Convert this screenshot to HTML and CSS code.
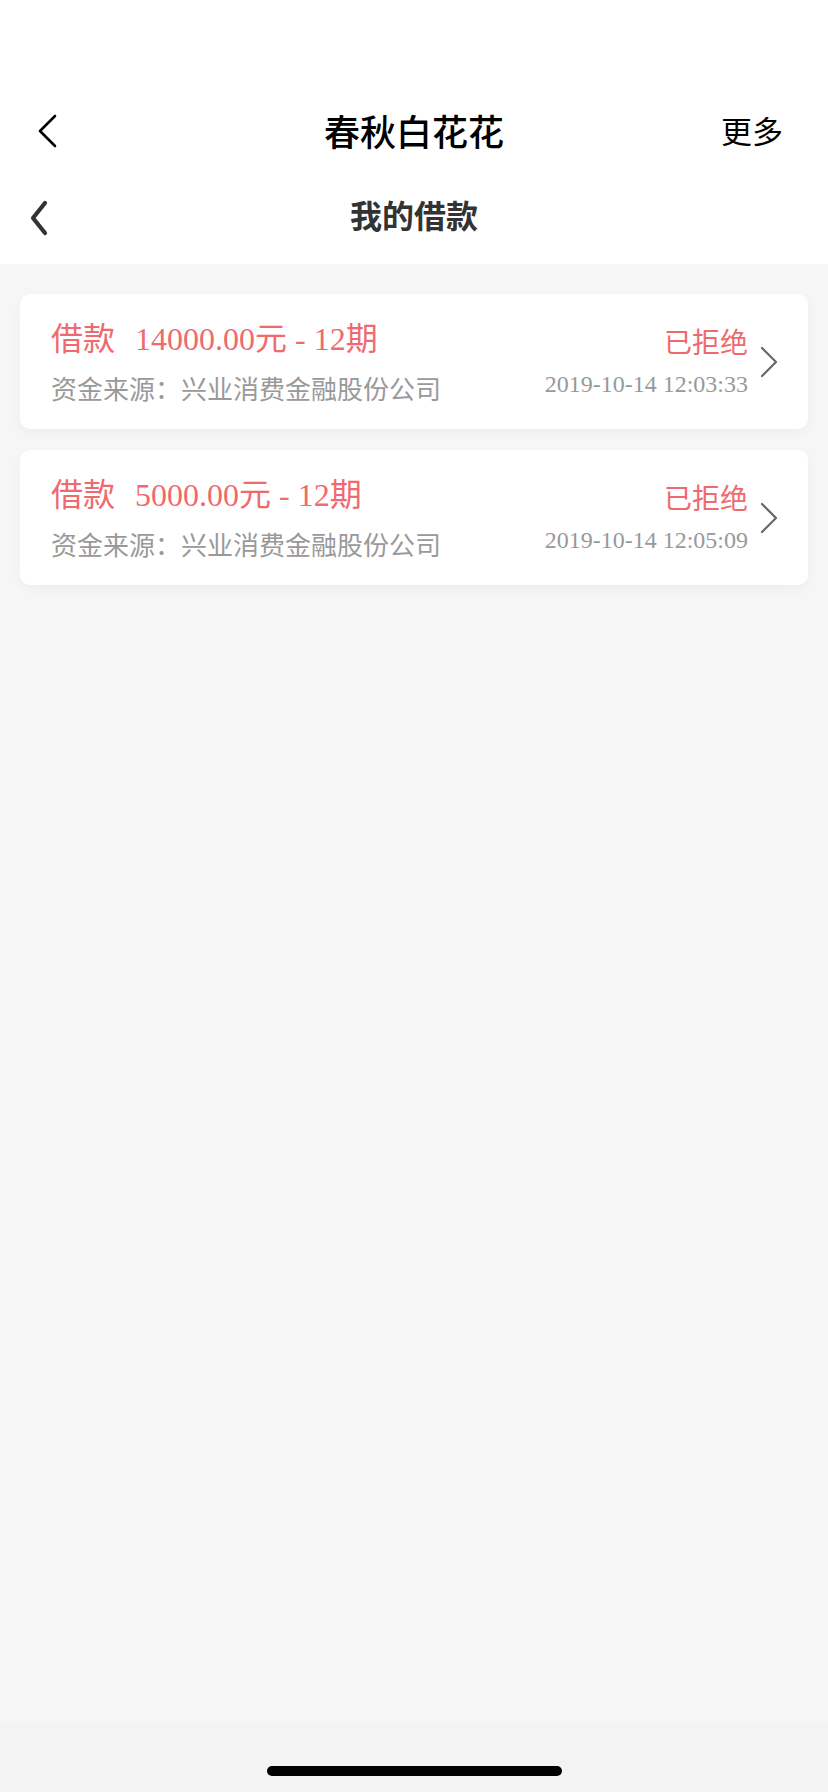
FILE: index.html
```html
<!DOCTYPE html>
<html lang="zh-CN">
<head>
<meta charset="utf-8">
<title>我的借款</title>
<link rel="stylesheet" href="styles.css">
</head>
<body>
<div class="screen">
  <header class="header">
    <div class="status"></div>
    <div class="nav nav-top">
      <span class="nav-back thin">
        <svg width="24" height="34" viewBox="0 0 24 34"><polyline points="19,2 4,17 19,32" fill="none" stroke="#000" stroke-width="2.6" stroke-linecap="round" stroke-linejoin="round"/></svg>
      </span>
      <span class="nav-title">春秋白花花</span>
      <span class="nav-more">更多</span>
    </div>
    <div class="nav nav-sub">
      <span class="nav-back bold">
        <svg width="26" height="36" viewBox="0 0 26 36"><polyline points="19,3 7,18 19,33" fill="none" stroke="#333" stroke-width="4.2" stroke-linecap="round" stroke-linejoin="round"/></svg>
      </span>
      <span class="sub-title">我的借款</span>
    </div>
  </header>
  <main class="list">
    <div class="card">
      <div class="card-left">
        <div class="loan"><span class="cjk">借款</span><span class="amount">14000.00<span class="cjk">元</span> - 12<span class="cjk">期</span></span></div>
        <div class="source">资金来源：兴业消费金融股份公司</div>
      </div>
      <div class="card-right">
        <div class="state">已拒绝</div>
        <div class="date">2019-10-14 12:03:33</div>
      </div>
      <svg class="arrow" width="18" height="32" viewBox="0 0 18 32"><polyline points="2,2 16,16 2,30" fill="none" stroke="#666" stroke-width="2.2" stroke-linecap="round" stroke-linejoin="round"/></svg>
    </div>
    <div class="card">
      <div class="card-left">
        <div class="loan"><span class="cjk">借款</span><span class="amount">5000.00<span class="cjk">元</span> - 12<span class="cjk">期</span></span></div>
        <div class="source">资金来源：兴业消费金融股份公司</div>
      </div>
      <div class="card-right">
        <div class="state">已拒绝</div>
        <div class="date">2019-10-14 12:05:09</div>
      </div>
      <svg class="arrow" width="18" height="32" viewBox="0 0 18 32"><polyline points="2,2 16,16 2,30" fill="none" stroke="#666" stroke-width="2.2" stroke-linecap="round" stroke-linejoin="round"/></svg>
    </div>
  </main>
  <footer class="home-bar">
    <span class="indicator"></span>
  </footer>
</div>
</body>
</html>
```

FILE: styles.css
```css
* { box-sizing: border-box; }
html, body { margin: 0; padding: 0; }
body {
  width: 828px;
  height: 1792px;
  background: #f7f7f7;
  font-family: "Noto Sans CJK SC", "Liberation Sans", sans-serif;
  overflow: hidden;
}
.screen {
  display: flex;
  flex-direction: column;
  height: 1792px;
}
.header {
  background: #fff;
  height: 264px;
  display: flex;
  flex-direction: column;
}
.status { height: 86px; }
.nav {
  height: 88px;
  display: flex;
  align-items: center;
  position: relative;
}
.nav-top .nav-back { margin-left: 36px; display: flex; margin-top: 2px; }
.nav-title {
  position: absolute;
  left: 0; right: 0;
  text-align: center;
  font-size: 36px;
  font-weight: 500;
  color: #000;
  line-height: 44px;
  pointer-events: none;
}
.nav-more {
  margin-left: auto;
  margin-right: 45px;
  font-size: 31px;
  color: #000;
  line-height: 40px;
}
.nav-sub { height: 90px; }
.nav-sub .nav-back { margin-left: 26px; display: flex; margin-top: -2px; }
.sub-title {
  position: absolute;
  left: 0; right: 0;
  text-align: center;
  font-size: 32px;
  font-weight: 700;
  color: #333;
  line-height: 40px;
  top: 20px;
}
.list {
  flex: 1;
  background: #f6f6f6;
  padding: 30px 20px 0;
  display: flex;
  flex-direction: column;
  gap: 21px;
}
.card {
  background: #fff;
  border-radius: 10px;
  height: 135px;
  display: flex;
  align-items: flex-start;
  padding: 22px 30px 0 31px;
  box-shadow: 0 4px 12px rgba(0, 0, 0, 0.04);
}
.card-left { flex: 1; }
.loan {
  color: #ef6a6e;
  font-family: "Liberation Serif", "Noto Sans CJK SC", serif;
  font-size: 32px;
  line-height: 40px;
  white-space: nowrap;
}
.cjk { font-family: "Noto Sans CJK SC", sans-serif; }
.amount { margin-left: 20px; }
.source {
  margin-top: 11px;
  font-size: 26px;
  line-height: 36px;
  color: #999;
}
.card-right {
  display: flex;
  flex-direction: column;
  align-items: flex-end;
  margin-top: 7px;
}
.state {
  font-size: 28px;
  line-height: 36px;
  color: #ef6a6e;
}
.date {
  margin-top: 9px;
  font-family: "Liberation Serif", serif;
  font-size: 24px;
  line-height: 32px;
  color: #999;
}
.arrow {
  align-self: center;
  margin-left: 12px;
  margin-top: -22px;
}
.home-bar {
  height: 69px;
  background: #f3f3f3;
  display: flex;
  justify-content: center;
}
.indicator {
  margin-top: 43px;
  width: 295px;
  height: 10px;
  border-radius: 5px;
  background: #000;
}
```
